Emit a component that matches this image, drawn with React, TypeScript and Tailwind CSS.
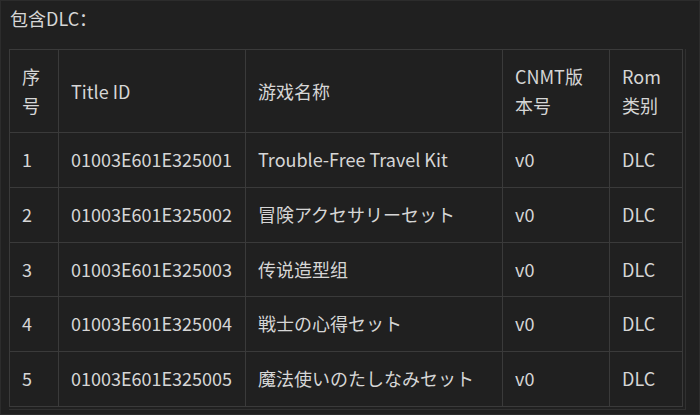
import React from "react";

const rows = [
  ["1", "01003E601E325001", "Trouble-Free Travel Kit", "v0", "DLC"],
  ["2", "01003E601E325002", "冒険アクセサリーセット", "v0", "DLC"],
  ["3", "01003E601E325003", "传说造型组", "v0", "DLC"],
  ["4", "01003E601E325004", "戦士の心得セット", "v0", "DLC"],
  ["5", "01003E601E325005", "魔法使いのたしなみセット", "v0", "DLC"],
];

const widths = ["w-[49px]", "w-[187px]", "w-[257px]", "w-[107px]", "w-[73px]"];

export default function App() {
  return (
    <div
      className="w-[700px] h-[415px] bg-[#202020] border border-[#2c2c2c] text-[#d6d6d6] text-[18px] overflow-hidden"
      style={{ fontFamily: '"Noto Sans CJK SC", "Noto Sans CJK JP", sans-serif' }}
    >
      <div className="pl-[9px] pt-[3px] leading-[28px]">包含DLC：</div>
      <div className="ml-[8px] mt-[17px] w-[677px] border-r border-b border-[#303030] pr-[2px] pb-[2px]">
        <table className="border-collapse table-fixed w-[674px]">
          <thead>
            <tr>
              {[
                <>序<br />号</>,
                "Title ID",
                "游戏名称",
                <>CNMT版<br />本号</>,
                <>Rom<br />类别</>,
              ].map((c, i) => (
                <th
                  key={i}
                  className={`${widths[i]} border border-[#3a3a3a] px-[12px] py-[12px] text-left font-normal leading-[29px] align-middle`}
                >
                  {c}
                </th>
              ))}
            </tr>
          </thead>
          <tbody>
            {rows.map((r, ri) => (
              <tr key={ri}>
                {r.map((c, i) => (
                  <td
                    key={i}
                    className={`${widths[i]} border border-[#3a3a3a] px-[12px] py-[12px] leading-[29.8px] whitespace-nowrap`}
                  >
                    {c}
                  </td>
                ))}
              </tr>
            ))}
          </tbody>
        </table>
      </div>
    </div>
  );
}
